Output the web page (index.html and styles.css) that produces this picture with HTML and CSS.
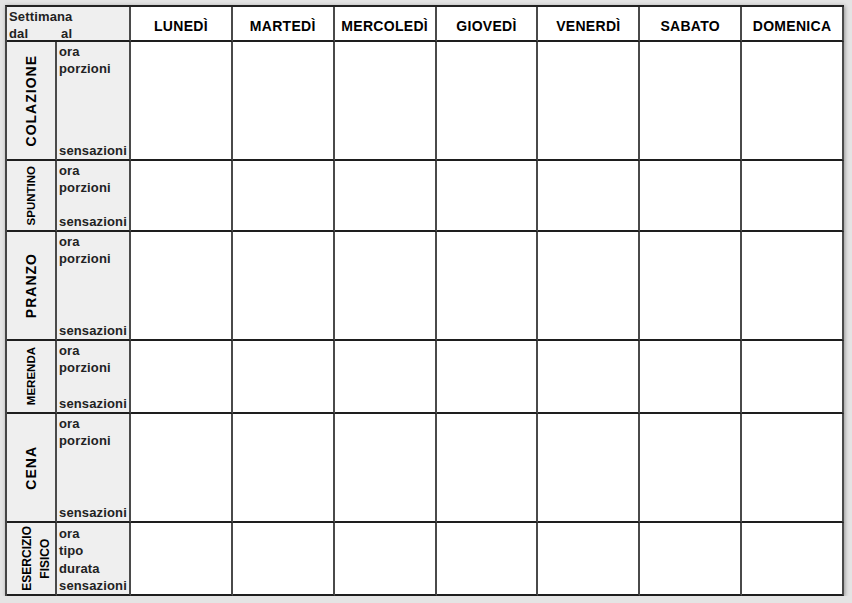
FILE: index.html
```html
<!DOCTYPE html>
<html lang="it">
<head>
<meta charset="utf-8">
<title>Diario alimentare settimanale</title>
<link rel="stylesheet" href="styles.css">
</head>
<body>
<div class="sheet">
  <div class="cell corner">
    <div class="week">Settimana</div>
    <div class="range"><span class="dal">dal</span><span>al</span></div>
  </div>
  <div class="cell day">LUNEDÌ</div>
  <div class="cell day">MARTEDÌ</div>
  <div class="cell day">MERCOLEDÌ</div>
  <div class="cell day">GIOVEDÌ</div>
  <div class="cell day">VENERDÌ</div>
  <div class="cell day">SABATO</div>
  <div class="cell day">DOMENICA</div>

  <div class="cell meal"><span class="vtext big">COLAZIONE</span></div>
  <div class="cell fields"><span>ora</span><span>porzioni</span><span class="bottom">sensazioni</span></div>
  <div class="cell"></div><div class="cell"></div><div class="cell"></div><div class="cell"></div><div class="cell"></div><div class="cell"></div><div class="cell"></div>

  <div class="cell meal"><span class="vtext small">SPUNTINO</span></div>
  <div class="cell fields"><span>ora</span><span>porzioni</span><span class="bottom">sensazioni</span></div>
  <div class="cell"></div><div class="cell"></div><div class="cell"></div><div class="cell"></div><div class="cell"></div><div class="cell"></div><div class="cell"></div>

  <div class="cell meal"><span class="vtext big">PRANZO</span></div>
  <div class="cell fields"><span>ora</span><span>porzioni</span><span class="bottom">sensazioni</span></div>
  <div class="cell"></div><div class="cell"></div><div class="cell"></div><div class="cell"></div><div class="cell"></div><div class="cell"></div><div class="cell"></div>

  <div class="cell meal"><span class="vtext small">MERENDA</span></div>
  <div class="cell fields"><span>ora</span><span>porzioni</span><span class="bottom">sensazioni</span></div>
  <div class="cell"></div><div class="cell"></div><div class="cell"></div><div class="cell"></div><div class="cell"></div><div class="cell"></div><div class="cell"></div>

  <div class="cell meal"><span class="vtext big">CENA</span></div>
  <div class="cell fields"><span>ora</span><span>porzioni</span><span class="bottom">sensazioni</span></div>
  <div class="cell"></div><div class="cell"></div><div class="cell"></div><div class="cell"></div><div class="cell"></div><div class="cell"></div><div class="cell"></div>

  <div class="cell meal"><span class="vtext small two">ESERCIZIO<br>FISICO</span></div>
  <div class="cell fields spread"><span>ora</span><span>tipo</span><span>durata</span><span>sensazioni</span></div>
  <div class="cell"></div><div class="cell"></div><div class="cell"></div><div class="cell"></div><div class="cell"></div><div class="cell"></div><div class="cell"></div>
</div>
</body>
</html>
```
FILE: styles.css
```css
html, body {
  margin: 0;
  padding: 0;
}
body {
  background: #e4e4e4;
  padding: 5px 0 0 5px;
  font-family: "Liberation Sans", Arial, sans-serif;
  color: #111;
}
.sheet {
  display: grid;
  grid-template-columns: 50px 74px repeat(7, 1fr);
  grid-template-rows: 35px 119px 71px 109px 73px 109px 73px;
  width: 839px;
  box-sizing: border-box;
  border-top: 2px solid #222;
  border-left: 2px solid #444;
  background: #fff;
  box-shadow: 1px 1px 4px rgba(0, 0, 0, 0.35);
}
.cell {
  border-right: 2px solid #4a4a4a;
  border-bottom: 2px solid #1e1e1e;
  box-sizing: border-box;
  min-width: 0;
}
.corner {
  grid-column: span 2;
  background: #efefef;
  font-size: 13px;
  font-weight: bold;
  letter-spacing: 0.15px;
  color: #222;
  line-height: 17px;
  padding: 1px 0 0 2px;
}
.range {
  display: flex;
}
.dal {
  width: 52px;
}
.day {
  display: flex;
  align-items: center;
  justify-content: center;
  font-weight: bold;
  font-size: 14px;
  letter-spacing: 0.3px;
  color: #000;
  padding-top: 4px;
  white-space: nowrap;
}
.meal {
  background: #efefef;
  display: flex;
  align-items: center;
  justify-content: center;
}
.vtext {
  writing-mode: vertical-rl;
  transform: rotate(180deg);
  font-weight: bold;
  text-align: center;
  white-space: nowrap;
  color: #000;
}
.vtext.big {
  font-size: 14px;
  letter-spacing: 1px;
}
.vtext.small {
  font-size: 11.5px;
}
.vtext.two {
  font-size: 12px;
  line-height: 18px;
  padding-right: 10px;
}
.fields {
  background: #efefef;
  display: flex;
  flex-direction: column;
  font-size: 13px;
  font-weight: bold;
  letter-spacing: 0.15px;
  color: #222;
  line-height: 17px;
  padding: 1px 0 0 2px;
}
.fields .bottom {
  margin-top: auto;
}
.fields.spread {
  justify-content: space-between;
  padding-top: 2px;
}
```
